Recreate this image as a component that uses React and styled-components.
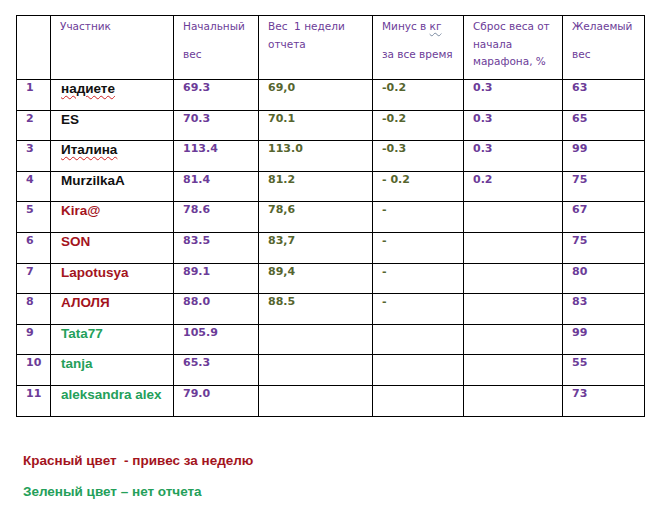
import React from 'react';
import styled, { createGlobalStyle } from 'styled-components';

const COLORS = {
  purple: '#6c3c98',
  olive: '#56652e',
  red: '#a3141d',
  green: '#24a05a',
  black: '#111111',
  line: '#000000'
};

const GlobalStyle = createGlobalStyle`
  html, body {
    margin: 0;
    padding: 0;
    background: #ffffff;
  }
`;

const Page = styled.div`
  width: 660px;
  height: 509px;
  padding: 15px 0 0 16px;
  box-sizing: border-box;
  font-family: 'DejaVu Sans', Verdana, sans-serif;
`;

const Table = styled.table`
  border-collapse: collapse;
  table-layout: fixed;
  width: 629px;
`;

const HeadCell = styled.th`
  border: 1px solid ${COLORS.line};
  height: 60px;
  padding: 3px 0 0 9px;
  vertical-align: top;
  text-align: left;
  font-weight: normal;
  font-size: 10.5px;
  color: ${COLORS.purple};
`;

const HeadLine = styled.div`
  line-height: 14px;
  white-space: pre;
  margin-top: ${props => props.$gap}px;
  &:first-child {
    margin-top: 0;
  }
`;

const Spell = styled.span`
  text-decoration-line: underline;
  text-decoration-style: wavy;
  text-decoration-color: ${props => props.$color || '#d02020'};
  text-decoration-thickness: 1px;
  text-underline-offset: 2px;
`;

const Row = styled.tr`
  height: 30.6px;
`;

const Cell = styled.td`
  border: 1px solid ${COLORS.line};
  padding: 1px 0 0 9px;
  vertical-align: top;
  font-size: 11px;
  line-height: 14px;
  font-weight: bold;
  color: ${props => props.$color};
  white-space: pre;
`;

const NameCell = styled(Cell)`
  padding-left: 10px;
  padding-top: 0;
  font-family: 'Liberation Sans', Arial, sans-serif;
  font-size: 13.5px;
  line-height: 17px;
`;

const Legend = styled.div`
  display: flex;
  flex-direction: column;
  gap: 14px;
  margin: 35px 0 0 7px;
  font-family: 'Liberation Sans', Arial, sans-serif;
  font-weight: bold;
  font-size: 13.5px;
  line-height: 17px;
`;

const LegendLine = styled.div`
  color: ${props => props.$color};
  white-space: pre;
`;

const widths = [34, 123, 85, 114, 91, 99, 82];

const header = [
  { lines: [''], gap: 0 },
  { lines: ['Участник'], gap: 0 },
  { lines: ['Начальный', 'вес'], gap: 14 },
  { lines: ['Вес  1 недели', 'отчета'], gap: 4 },
  {
    lines: [
      <>
        Минус в <Spell $color="#7a8aa0">кг</Spell>
      </>,
      'за все время'
    ],
    gap: 14
  },
  { lines: ['Сброс веса от', 'начала', 'марафона, %'], gap: 3.5 },
  { lines: ['Желаемый', 'вес'], gap: 14 }
];

const rows = [
  { n: 1, name: 'надиете', spell: true, tone: 'black', start: '69.3', week: '69,0', minus: '-0.2', drop: '0.3', goal: '63' },
  { n: 2, name: 'ES', tone: 'black', start: '70.3', week: '70.1', minus: '-0.2', drop: '0.3', goal: '65' },
  { n: 3, name: 'Италина', spell: true, tone: 'black', start: '113.4', week: '113.0', minus: '-0.3', drop: '0.3', goal: '99' },
  { n: 4, name: 'MurzilkaA', tone: 'black', start: '81.4', week: '81.2', minus: '- 0.2', drop: '0.2', goal: '75' },
  { n: 5, name: 'Kira@', tone: 'red', start: '78.6', week: '78,6', minus: '-', drop: '', goal: '67' },
  { n: 6, name: 'SON', tone: 'red', start: '83.5', week: '83,7', minus: '-', drop: '', goal: '75' },
  { n: 7, name: 'Lapotusya', tone: 'red', start: '89.1', week: '89,4', minus: '-', drop: '', goal: '80' },
  { n: 8, name: 'АЛОЛЯ', tone: 'red', start: '88.0', week: '88.5', minus: '-', drop: '', goal: '83' },
  { n: 9, name: 'Tata77', tone: 'green', start: '105.9', week: '', minus: '', drop: '', goal: '99' },
  { n: 10, name: 'tanja', tone: 'green', start: '65.3', week: '', minus: '', drop: '', goal: '55' },
  { n: 11, name: 'aleksandra alex', tone: 'green', start: '79.0', week: '', minus: '', drop: '', goal: '73' }
];

const App = () => (
  <Page>
    <GlobalStyle />
    <Table>
      <colgroup>
        {widths.map((w, i) => (
          <col key={i} style={{ width: w }} />
        ))}
      </colgroup>
      <thead>
        <tr>
          {header.map((h, i) => (
            <HeadCell key={i}>
              {h.lines.map((l, j) => (
                <HeadLine key={j} $gap={h.gap}>
                  {l}
                </HeadLine>
              ))}
            </HeadCell>
          ))}
        </tr>
      </thead>
      <tbody>
        {rows.map(r => (
          <Row key={r.n}>
            <Cell $color={COLORS.purple}>{r.n}</Cell>
            <NameCell $color={COLORS[r.tone]}>
              {r.spell ? <Spell>{r.name}</Spell> : r.name}
            </NameCell>
            <Cell $color={COLORS.purple}>{r.start}</Cell>
            <Cell $color={COLORS.olive}>{r.week}</Cell>
            <Cell $color={COLORS.olive}>{r.minus}</Cell>
            <Cell $color={COLORS.purple}>{r.drop}</Cell>
            <Cell $color={COLORS.purple}>{r.goal}</Cell>
          </Row>
        ))}
      </tbody>
    </Table>
    <Legend>
      <LegendLine $color={COLORS.red}>Красный цвет  - привес за неделю</LegendLine>
      <LegendLine $color={COLORS.green}>Зеленый цвет – нет отчета</LegendLine>
    </Legend>
  </Page>
);

export default App;
